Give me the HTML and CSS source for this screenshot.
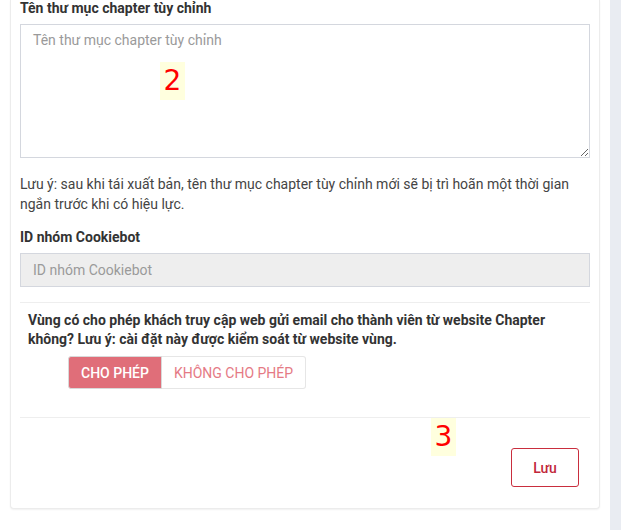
FILE: index.html
```html
<!DOCTYPE html>
<html lang="vi">
<head>
	<meta charset="UTF-8">
	<title>Cài đặt chapter</title>
	<link rel="stylesheet" href="styles.css">
</head>
<body>
	<div class="page">
		<div class="card">
			<div class="field">
				<label class="label">Tên thư mục chapter tùy chỉnh</label>
				<textarea class="textbox" placeholder="Tên thư mục chapter tùy chỉnh"></textarea>
				<span class="marker marker_2">2</span>
			</div>
			<p class="note">Lưu ý: sau khi tái xuất bản, tên thư mục chapter tùy chỉnh mới sẽ bị trì hoãn một thời gian ngắn trước khi có hiệu lực.</p>
			<div class="field">
				<label class="label">ID nhóm Cookiebot</label>
				<input type="text" class="input" placeholder="ID nhóm Cookiebot" disabled>
			</div>
			<div class="section">
				<div class="question">Vùng có cho phép khách truy cập web gửi email cho thành viên từ website Chapter không? Lưu ý: cài đặt này được kiểm soát từ website vùng.</div>
				<div class="toggle">
					<button class="toggle_btn active">CHO PHÉP</button><button class="toggle_btn">KHÔNG CHO PHÉP</button>
				</div>
			</div>
			<div class="footer">
				<span class="marker marker_3">3</span>
				<button class="save">Lưu</button>
			</div>
		</div>
		<div class="side"></div>
	</div>
</body>
</html>
```

FILE: styles.css
```css
*{box-sizing: border-box;}
html,body{margin:0;height:100%;overflow:hidden;background:#fff;}
body{font-family: Roboto, "Liberation Sans", Arial, sans-serif;font-size:14px;color:#333;}
.page{display:flex;height:100%;}
.card{width:590px;margin-left:10px;align-self:flex-start;background:#fff;padding:0 10px 21px;border:1px solid #ececec;border-top:none;border-radius:0 0 4px 4px;box-shadow:0 1px 2px rgba(0,0,0,0.06);}
.side{margin-left:10px;flex:1;background:#e9ecf2;}
.field{position:relative;}
.label{display:block;font-weight:bold;font-size:14px;line-height:16px;color:#333;margin-left:-1px;}
.textbox{display:block;width:570px;height:134px;margin-top:8px;margin-left:-1px;padding:7px 12px;border:1px solid #d4d7de;font-family:inherit;font-size:14px;color:#333;resize:vertical;outline:none;}
.textbox::placeholder,.input::placeholder{color:#9a9a9a;}
.note{margin:16px 0 0 -1px;line-height:20px;font-size:14px;color:#444;}
.note + .field{margin-top:15px;}
.input{display:block;width:570px;height:34px;margin-top:8px;margin-left:-1px;padding:0 12px;border:1px solid #d4d7de;background:#eeeeee;font-family:inherit;font-size:14px;}
.section{margin-top:15px;border-top:1px solid #eeeeee;border-bottom:1px solid #eeeeee;padding:8px 0 28px 8px;margin-left:-1px;width:570px;}
.question{font-weight:bold;line-height:19px;color:#333;padding-right:20px;}
.toggle{display:flex;margin:7px 0 0 40px;}
.toggle_btn{height:33px;padding:0 12px;border:1px solid #e6e6e6;background:#fff;color:#e57a85;font-family:inherit;font-size:14px;cursor:pointer;}
.toggle_btn:first-child{border-radius:3px 0 0 3px;}
.toggle_btn:last-child{border-radius:0 3px 3px 0;border-left:none;}
.toggle_btn.active{background:#e06e79;border-color:#d9d9d9;color:#fff;font-weight:500;}
.footer{position:relative;display:flex;justify-content:flex-end;padding:30px 10px 0 0;}
.save{width:68px;height:39px;border:1px solid #c92e3e;border-radius:3px;background:#fff;color:#c1273a;font-family:inherit;font-size:14px;font-weight:500;cursor:pointer;}
.marker{position:absolute;width:25px;height:38px;background:#ffffde;color:#f00;font-family:"DejaVu Sans",sans-serif;font-size:28px;line-height:38px;text-align:center;}
.marker_2{left:139px;top:62px;}
.marker_3{left:410px;top:0;}
```
